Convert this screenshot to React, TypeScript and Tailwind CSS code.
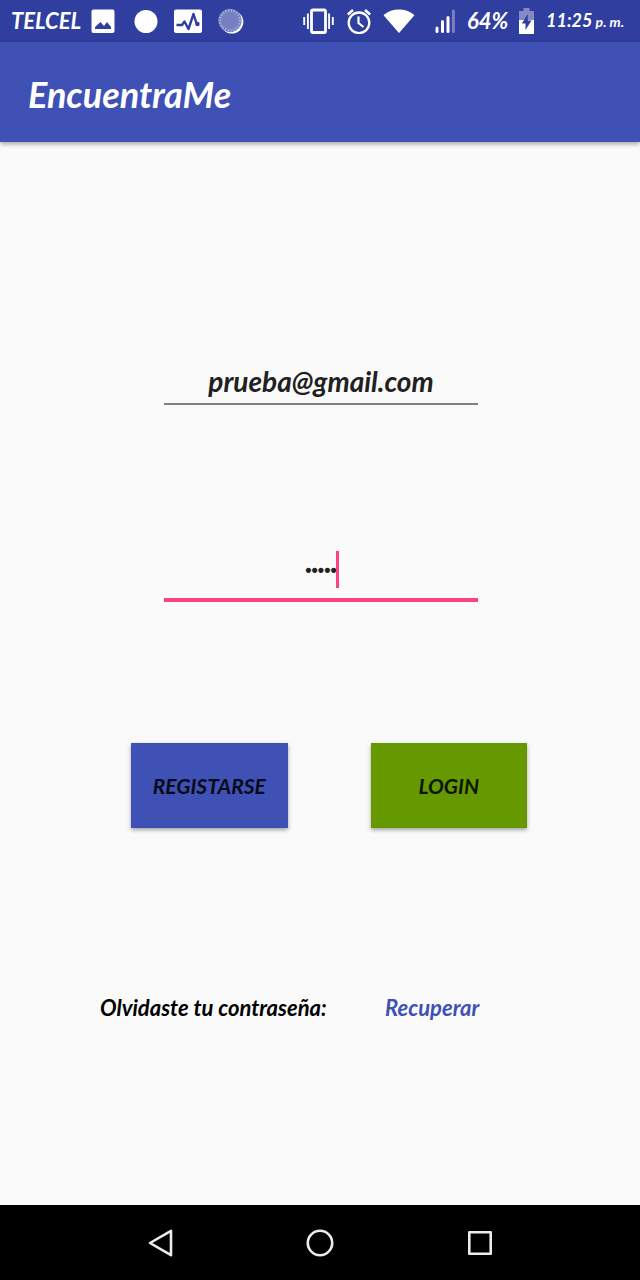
import { useState } from "react";

function StatusBar() {
  return (
    <div className="flex h-[42px] shrink-0 items-center justify-between bg-[#303f9f] pr-3 pl-[11px] text-white">
      <div className="flex items-center">
        <span className="w-20 text-[22px] leading-6 font-bold italic">TELCEL</span>
        <svg className="h-6 w-6" viewBox="0 0 24 24" aria-hidden="true">
          <path
            fillRule="evenodd"
            fill="currentColor"
            d="M2.500 .5h19Q23.500 .5 23.500 2.500v19.500Q23.500 24 21.500 24h-19Q.5 24 .5 22V2.500Q.5 .5 2.500 .5zM4 20h16v-2l-4-5-3 4-3.500-4L4 18z"
          />
        </svg>
        <svg className="ml-[19px] h-6 w-6" viewBox="0 0 24 24" aria-hidden="true">
          <circle cx="12" cy="12.500" r="11.500" fill="currentColor" />
        </svg>
        <svg className="ml-4 h-6 w-7" viewBox="0 0 28 24" aria-hidden="true">
          <rect y=".5" width="28" height="23.500" rx="2" fill="currentColor" />
          <path
            d="M2.500 16H8l2.500-3.500 4 7.500L19.500 5l3.500 11"
            fill="none"
            stroke="#303f9f"
            strokeWidth="2.400"
            strokeLinejoin="round"
          />
          <circle cx="23.500" cy="15" r="2.200" fill="#303f9f" />
        </svg>
        <svg className="ml-4 h-[26px] w-[26px]" viewBox="0 0 26 26" aria-hidden="true">
          <circle cx="13.800" cy="14" r="11.500" fill="#fff" />
          <circle cx="12" cy="12.500" r="11.700" fill="#7680c0" />
          <circle
            cx="12"
            cy="12.500"
            r="10"
            fill="none"
            stroke="#a9b0da"
            strokeWidth="2.500"
            strokeDasharray="1.200 1.600"
          />
        </svg>
      </div>
      <div className="flex items-center">
        <svg className="h-7 w-8" viewBox="0 0 32 28" fill="none" stroke="currentColor" aria-hidden="true">
          <rect x="8.500" y="3" width="14" height="22.500" rx="1.500" strokeWidth="2.800" />
          <path d="M1.200 10v8M29.800 10v8M4.900 6.500v15.500M26.100 6.500v15.500" strokeWidth="1.900" />
        </svg>
        <svg className="ml-3 h-[26px] w-6" viewBox="0 0 24 26" fill="none" stroke="currentColor" aria-hidden="true">
          <circle cx="12" cy="14.800" r="10.300" strokeWidth="2.300" />
          <path d="M11.500 8.500V15l5 4" strokeWidth="2.200" />
          <path d="M.8 6.500 6 2M18 2l5.200 4.500" strokeWidth="2.600" />
        </svg>
        <svg className="ml-3 h-6 w-8" viewBox="0 0 32 24" fill="currentColor" aria-hidden="true">
          <path d="M1 5.800C9-1.400 23-1.400 31 5.800Q31.500 6.300 31 6.800L16.500 23.500Q16 24 15.500 23.500L1 6.800Q.5 6.300 1 5.800z" />
        </svg>
        <svg className="ml-5 h-6 w-5" viewBox="0 0 20 24" fill="none" stroke="currentColor" strokeWidth="3" strokeLinecap="round" aria-hidden="true">
          <path d="M2 22.500v-3.500M7.500 22.500V12.500M13 22.500V8.500" />
          <path d="M18.400 22.500V2" opacity=".35" />
        </svg>
        <span className="ml-3 w-[52px] text-[22px] leading-6 font-bold italic">64%</span>
        <svg className="h-[26px] w-[15px]" viewBox="0 0 15 26" fill="currentColor" aria-hidden="true">
          <path d="M4.500 0h6v3H15v9H0V3h4.500z" opacity=".4" />
          <path d="M0 12h15v14H0z" />
          <path d="M8.800 6 2.800 15.500h3.700V22l6-9.500H8.800z" fill="#303f9f" />
        </svg>
        <span className="ml-3 flex w-[82px] items-baseline justify-between pr-1 leading-6 font-bold whitespace-nowrap italic">
          <span className="text-[18px]">11:25</span>
          <span className="text-[14px]">p. m.</span>
        </span>
      </div>
    </div>
  );
}

function NavigationBar() {
  return (
    <nav className="grid h-[75px] shrink-0 grid-cols-[1fr_160px_160px_160px_1fr] bg-black text-[#ececec]">
      <button type="button" aria-label="Atrás" className="col-start-2 flex items-center justify-center">
        <svg className="h-8 w-8" viewBox="0 0 32 32" fill="none" stroke="currentColor" strokeWidth="2.600" strokeLinejoin="round">
          <path d="M27 3.800v24.400L6 16z" />
        </svg>
      </button>
      <button type="button" aria-label="Inicio" className="flex items-center justify-center">
        <svg className="h-8 w-8" viewBox="0 0 32 32" fill="none" stroke="currentColor" strokeWidth="2.600">
          <circle cx="16" cy="16" r="12.200" />
        </svg>
      </button>
      <button type="button" aria-label="Recientes" className="flex items-center justify-center">
        <svg className="h-8 w-8" viewBox="0 0 32 32" fill="none" stroke="currentColor" strokeWidth="2.600" strokeLinejoin="round">
          <rect x="5.300" y="5.300" width="21.400" height="21.400" />
        </svg>
      </button>
    </nav>
  );
}

const buttonStyle =
  "h-[85px] flex-1 text-[21px] font-bold italic uppercase shadow-[0_2px_4px_rgba(0,0,0,0.35)]";

export default function App() {
  const [email, setEmail] = useState("prueba@gmail.com");
  const [password, setPassword] = useState("12345");

  return (
    <div className="flex min-h-screen flex-col bg-[#fafafa] font-['Lato','Open_Sans',sans-serif]">
      <StatusBar />
      <header className="z-10 flex h-[100px] shrink-0 items-center bg-[#3f51b5] px-7 shadow-[0_2px_5px_rgba(0,0,0,0.35)]">
        <h1 className="pt-1 text-[36px] leading-10 font-bold text-white italic">EncuentraMe</h1>
      </header>
      <main className="flex-1 pt-[216px] pr-4 pb-16 pl-[18px]">
        <form onSubmit={(e) => e.preventDefault()}>
          <input
            type="email"
            aria-label="Correo electrónico"
            value={email}
            onChange={(e) => setEmail(e.target.value)}
            className="mx-auto block h-[47px] w-full max-w-[314px] border-b-2 border-[#808080] bg-transparent text-center text-[28px] font-bold text-[#212121] italic outline-none"
          />
          <div className="relative mx-auto mt-[134px] w-full max-w-[314px]">
            <input
              type="password"
              aria-label="Contraseña"
              value={password}
              onChange={(e) => setPassword(e.target.value)}
              className="peer block h-[63px] w-full border-b-4 border-[#ff4081] bg-transparent pt-1 text-center font-['Liberation_Sans',sans-serif] text-[18px] font-bold text-[#212121] caret-[#ff4081] outline-none"
            />
            <span className="absolute top-3 left-1/2 ml-[15px] h-[37px] w-[3px] bg-[#ff4081] peer-focus:hidden" />
          </div>
          <div className="mx-auto mt-[141px] w-full max-w-[412px] pl-4">
            <div className="flex gap-[83px]">
              <button type="button" className={`${buttonStyle} bg-[#3f51b5] text-[#080a17]`}>
                Registarse
              </button>
              <button type="submit" className={`${buttonStyle} bg-[#669900] text-[#0d1400]`}>
                Login
              </button>
            </div>
          </div>
        </form>
        <div className="mx-auto mt-[164px] flex w-full max-w-[442px] items-center text-[22px] leading-8 font-bold italic">
          <p className="w-[285px] text-black">Olvidaste tu contraseña:</p>
          <a href="#recuperar" className="text-[#3f51b5]">
            Recuperar
          </a>
        </div>
      </main>
      <NavigationBar />
    </div>
  );
}
